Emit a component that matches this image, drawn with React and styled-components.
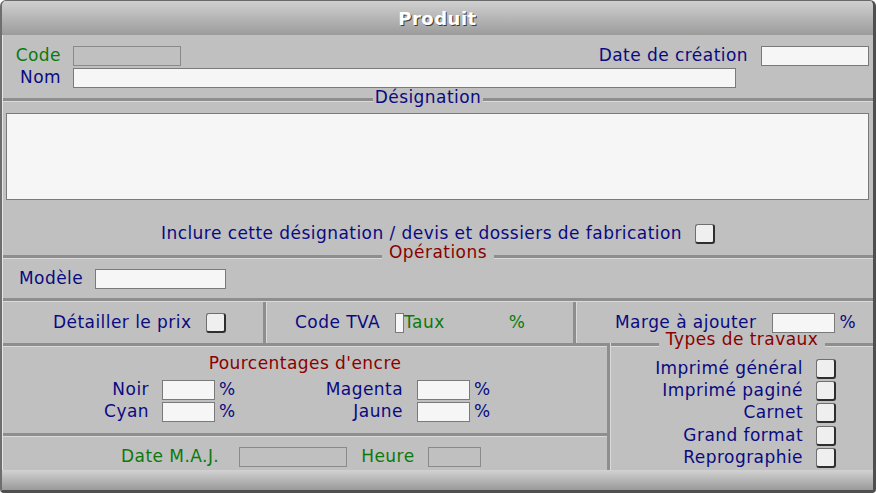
import React from "react";
import styled, { createGlobalStyle } from "styled-components";

const GlobalStyle = createGlobalStyle`
  html, body { margin: 0; padding: 0; background: #ffffff; }
  body { font-family: "DejaVu Sans", Verdana, sans-serif; }
`;

const NAVY = "#0a0a80";
const GREEN = "#0b7a0b";
const RED = "#8a0000";

const Window = styled.div`
  width: 876px;
  height: 493px;
  box-sizing: border-box;
  display: flex;
  flex-direction: column;
  background: #c0c0c0;
  border-top: 1px solid #6a6a6a;
  border-left: 2px solid #6e6e6e;
  border-right: 3px solid #4f4f4f;
  border-bottom: 3px solid #4f4f4f;
  border-radius: 6px 6px 4px 4px;
  overflow: hidden;
  font-size: 17px;
  letter-spacing: 0.45px;
  color: ${NAVY};
`;

const TitleBar = styled.div`
  height: 34px;
  flex: none;
  display: flex;
  align-items: center;
  justify-content: center;
  background: linear-gradient(#d0d0d0, #9b9b9b);
  color: #ffffff;
  font-weight: bold;
  font-size: 18px;
  letter-spacing: 0.5px;
  text-shadow: 1px 1px 0 #3c3c3c;
`;

const Body = styled.div`
  flex: 1;
  display: flex;
  flex-direction: column;
  padding-left: 1px;
  box-shadow: inset 1px 0 0 #e6e6e6;
  min-height: 0;
`;

const Footer = styled.div`
  height: 20px;
  flex: none;
  background: linear-gradient(#d2d2d2, #9a9a9a);
`;

const Row = styled.div`
  display: flex;
  align-items: center;
  height: 20px;
  margin-top: ${(p) => p.$top || 0}px;
  padding-left: ${(p) => p.$left || 0}px;
  padding-right: ${(p) => p.$right || 0}px;
  justify-content: ${(p) => p.$justify || "flex-start"};
`;

const Label = styled.span`
  line-height: 18px;
  padding-bottom: 2px;
  white-space: nowrap;
  color: ${(p) => p.$color || NAVY};
  width: ${(p) => (p.$width ? `${p.$width}px` : "auto")};
  text-align: ${(p) => p.$align || "left"};
  margin-right: ${(p) => p.$gap ?? 0}px;
  margin-left: ${(p) => p.$ml || 0}px;
  flex: none;
`;

const Input = styled.div`
  box-sizing: border-box;
  height: 20px;
  width: ${(p) => p.$w}px;
  flex: none;
  border: 1px solid ${(p) => (p.$disabled ? "#8a8a8a" : "#7a7a7a")};
  background: ${(p) => (p.$disabled ? "#c0c0c0" : "#f6f6f6")};
  margin-right: ${(p) => p.$gap ?? 0}px;
  justify-self: end;
`;

const Check = styled.div`
  box-sizing: border-box;
  width: 20px;
  height: 20px;
  flex: none;
  background: #efefef;
  border: 1px solid #6e6e6e;
  border-right: 2px solid #2e2e2e;
  border-bottom: 2px solid #2e2e2e;
  border-radius: 3px;
`;

const Spacer = styled.div`
  flex: 1;
`;

const Groove = styled.div`
  flex: none;
  height: 4px;
  box-sizing: border-box;
  border-top: 3px solid #8e8e8e;
  border-bottom: 1px solid #dadada;
  margin-top: ${(p) => p.$top || 0}px;
`;

const TitleRow = styled.div`
  display: flex;
  height: 20px;
  flex: none;
  margin-top: ${(p) => p.$top || 0}px;
`;

const TitleLine = styled(Groove)`
  flex: 1 0 ${(p) => p.$extra || 0}px;
  align-self: flex-end;
  margin-bottom: ${(p) => p.$bottom}px;
`;

const TitleText = styled.span`
  line-height: 18px;
  padding: 0 ${(p) => p.$pad}px 2px;
  white-space: nowrap;
  color: ${(p) => p.$color};
`;

const SectionTitle = ({ children, color, pad, bottom, top, shift }) => (
  <TitleRow $top={top}>
    <TitleLine $bottom={bottom} />
    <TitleText $color={color} $pad={pad}>
      {children}
    </TitleText>
    <TitleLine $bottom={bottom} $extra={shift} />
  </TitleRow>
);

const TextArea = styled.div`
  box-sizing: border-box;
  height: 87px;
  margin: 5px 4px 0 3px;
  border: 1px solid #7a7a7a;
  background: #f6f6f6;
  flex: none;
`;

const CellsRow = styled.div`
  display: flex;
  height: 41px;
  flex: none;
`;

const Cell = styled.div`
  display: flex;
  align-items: center;
  width: ${(p) => (p.$w ? `${p.$w}px` : "auto")};
  flex: ${(p) => (p.$w ? "none" : 1)};
  padding-left: ${(p) => p.$left}px;
  box-sizing: border-box;
`;

const VDivider = styled.div`
  width: 4px;
  flex: none;
  box-sizing: border-box;
  border-left: 3px solid #8e8e8e;
  border-right: 1px solid #dadada;
`;

const Bottom = styled.div`
  flex: 1;
  display: flex;
  min-height: 0;
`;

const Panel = styled.div`
  display: flex;
  flex-direction: column;
  width: ${(p) => (p.$w ? `${p.$w}px` : "auto")};
  flex: ${(p) => (p.$w ? "none" : 1)};
`;

const PanelHeading = styled.div`
  text-align: center;
  line-height: 18px;
  padding-bottom: 2px;
  color: ${RED};
  margin-top: 7px;
`;

const InkGrid = styled.div`
  display: grid;
  grid-template-columns: 146px 66px 36px 152px 67px auto;
  grid-auto-rows: 22px;
  align-items: start;
  margin-top: 6px;
`;

const Pct = styled.span`
  line-height: 18px;
  padding: 0 0 2px 4px;
  color: ${(p) => p.$color || NAVY};
`;

const WorkList = styled.div`
  display: flex;
  flex-direction: column;
  margin-top: 8px;
`;

const WorkRow = styled.div`
  display: flex;
  align-items: center;
  justify-content: flex-end;
  height: 22.2px;
  padding-right: 37px;
`;

const works = [
  "Imprimé général",
  "Imprimé paginé",
  "Carnet",
  "Grand format",
  "Reprographie",
];

export default function App() {
  return (
    <>
      <GlobalStyle />
      <Window>
        <TitleBar>Produit</TitleBar>
        <Body>
          <Row $top={11} $right={4}>
            <Label $width={58} $align="right" $gap={12} $color={GREEN}>
              Code
            </Label>
            <Input $w={108} $disabled />
            <Spacer />
            <Label $gap={13}>Date de création</Label>
            <Input $w={108} />
          </Row>
          <Row $top={2}>
            <Label $width={58} $align="right" $gap={12}>
              Nom
            </Label>
            <Input $w={663} />
          </Row>

          <SectionTitle color={NAVY} pad={2} bottom={6} shift={20}>
            Désignation
          </SectionTitle>
          <TextArea />

          <Row $top={24} $justify="center">
            <Label $gap={13}>
              Inclure cette désignation / devis et dossiers de fabrication
            </Label>
            <Check />
          </Row>

          <SectionTitle color={RED} pad={7} bottom={4} top={-1}>
            Opérations
          </SectionTitle>

          <Row $top={6} $left={16}>
            <Label $gap={12}>Modèle</Label>
            <Input $w={131} />
          </Row>

          <Groove $top={9} />
          <CellsRow>
            <Cell $w={260} $left={50}>
              <Label $gap={15}>Détailler le prix</Label>
              <Check />
            </Cell>
            <VDivider />
            <Cell $w={306} $left={28}>
              <Label $gap={15}>Code TVA</Label>
              <Input $w={9} />
              <Label $color={GREEN}>Taux</Label>
              <Label $color={GREEN} $ml={64}>
                %
              </Label>
            </Cell>
            <VDivider />
            <Cell $left={38}>
              <Label $gap={16}>Marge à ajouter</Label>
              <Input $w={63} $gap={4} />
              <Label>%</Label>
            </Cell>
          </CellsRow>

          <Bottom>
            <Panel $w={604}>
              <Groove />
              <PanelHeading>Pourcentages d'encre</PanelHeading>
              <InkGrid>
                <Label $align="right">Noir</Label>
                <Input $w={53} />
                <Pct>%</Pct>
                <Label $align="right">Magenta</Label>
                <Input $w={53} />
                <Pct>%</Pct>
                <Label $align="right">Cyan</Label>
                <Input $w={53} />
                <Pct>%</Pct>
                <Label $align="right">Jaune</Label>
                <Input $w={53} />
                <Pct>%</Pct>
              </InkGrid>
              <Groove $top={9} />
              <Row $top={10} $left={118}>
                <Label $color={GREEN} $gap={20}>
                  Date M.A.J.
                </Label>
                <Input $w={108} $disabled $gap={14} />
                <Label $color={GREEN} $gap={13}>
                  Heure
                </Label>
                <Input $w={53} $disabled />
              </Row>
            </Panel>
            <VDivider />
            <Panel>
              <SectionTitle color={RED} pad={7} bottom={3} top={-13}>
                Types de travaux
              </SectionTitle>
              <WorkList>
                {works.map((w) => (
                  <WorkRow key={w}>
                    <Label $gap={13}>{w}</Label>
                    <Check />
                  </WorkRow>
                ))}
              </WorkList>
            </Panel>
          </Bottom>
        </Body>
        <Footer />
      </Window>
    </>
  );
}
